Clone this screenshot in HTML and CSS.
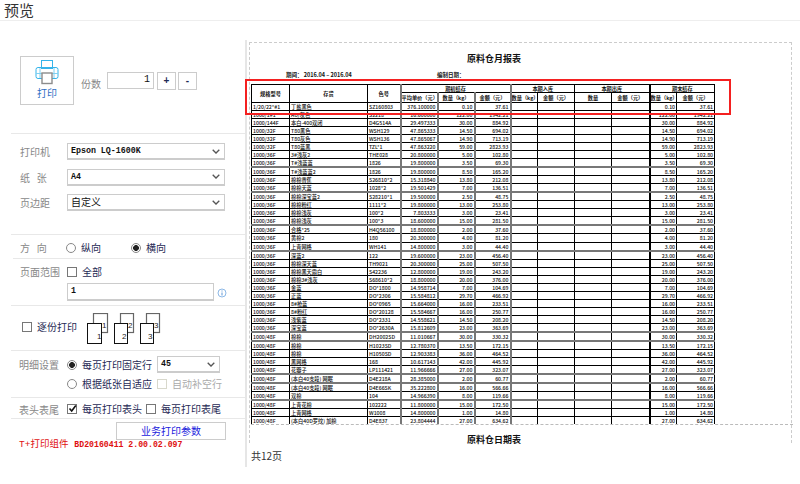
FILE: index.html
```html
<!DOCTYPE html>
<html lang="zh-CN">
<head>
<meta charset="utf-8">
<title>预览</title>
<link rel="stylesheet" href="styles.css">
</head>
<body>
<header class="topbar">预览</header>
<div class="layout">
  <aside class="panel">
    <section class="sec sec-print">
      <button class="print-btn">
        <svg width="24" height="25" viewBox="0 0 24 25" fill="none">
          <rect x="6.5" y="0.5" width="11" height="8" stroke="#35b4ea"/>
          <rect x="1" y="7.5" width="22" height="11" rx="2" stroke="#35b4ea"/>
          <path d="M1 13.5H23M5 8V18M19 8V18" stroke="#7fd0f2"/>
          <rect x="7" y="13" width="10" height="10.5" fill="#fff" stroke="#8c8c8c" stroke-width="1.4"/>
        </svg>
        <span>打印</span>
      </button>
      <span class="copies-label">份数</span>
      <span class="copies-input">1</span>
      <span class="step">+</span>
      <span class="step">-</span>
    </section>
    <section class="sec sec-form">
      <div class="field"><label>打印机</label><div class="select mono">Epson LQ-1600K<svg class="chev" viewBox="0 0 8 5"><path d="M.7.8 4 4 7.3.8" fill="none" stroke="#555" stroke-width="1.3"/></svg></div></div>
      <div class="field"><label>纸&nbsp;&nbsp;&nbsp;张</label><div class="select mono">A4<svg class="chev" viewBox="0 0 8 5"><path d="M.7.8 4 4 7.3.8" fill="none" stroke="#555" stroke-width="1.3"/></svg></div></div>
      <div class="field"><label>页边距</label><div class="select">自定义<svg class="chev" viewBox="0 0 8 5"><path d="M.7.8 4 4 7.3.8" fill="none" stroke="#555" stroke-width="1.3"/></svg></div></div>
    </section>
    <section class="sec sec-dir">
      <label class="lbl">方&nbsp;&nbsp;&nbsp;向</label>
      <span class="radio"></span><span class="opt opt-a">纵向</span>
      <span class="radio on"></span><span class="opt">横向</span>
    </section>
    <section class="sec sec-range">
      <div class="line">
        <label class="lbl">页面范围</label>
        <span class="check"></span><span class="opt">全部</span>
      </div>
      <div class="range-row">
        <div class="range-input">1</div>
        <svg class="info" width="10" height="10" viewBox="0 0 10 10"><circle cx="5" cy="5" r="4" fill="none" stroke="#8db8e6"/><path d="M5 2.5v1M5 4.5v3" stroke="#5d97d8"/></svg>
      </div>
    </section>
    <section class="sec sec-collate">
      <span class="check"></span><span class="opt collate-text">逐份打印</span>
      <svg class="pages" width="74" height="31" viewBox="0 0 74 31" font-family="Liberation Sans" font-size="8">
        <g fill="#fff">
          <rect x="6.5" y=".5" width="14" height="19" stroke="#666" stroke-width="1.2"/><text x="15" y="15" fill="#222">1</text>
          <rect x=".5" y="10.5" width="14" height="20" stroke="#111"/><text x="10" y="26" fill="#222">1</text>
          <rect x="33.5" y=".5" width="13" height="19" stroke="#666" stroke-width="1.2"/><text x="41" y="15" fill="#222">2</text>
          <rect x="27.5" y="10.5" width="13" height="20" stroke="#111"/><text x="35" y="26" fill="#222">2</text>
          <rect x="59.5" y=".5" width="13" height="19" stroke="#666" stroke-width="1.2"/><text x="67" y="15" fill="#222">3</text>
          <rect x="53.5" y="10.5" width="13" height="20" stroke="#111"/><text x="61" y="26" fill="#222">3</text>
        </g>
      </svg>
    </section>
    <section class="sec sec-detail">
      <div class="line">
        <label class="lbl">明细设置</label>
        <span class="radio on"></span><span class="opt opt-w">每页打印固定行</span>
        <div class="select select-sm mono">45<svg class="chev" viewBox="0 0 8 5"><path d="M.7.8 4 4 7.3.8" fill="none" stroke="#555" stroke-width="1.3"/></svg></div>
      </div>
      <div class="line">
        <label class="lbl"></label>
        <span class="radio"></span><span class="opt opt-w">根据纸张自适应</span>
        <span class="check disabled"></span><span class="opt muted">自动补空行</span>
      </div>
    </section>
    <section class="sec sec-tail">
      <label class="lbl">表头表尾</label>
      <span class="check checked"><svg width="9" height="9" viewBox="0 0 9 9"><path d="M1.5 4.5 3.7 7 7.8 1.5" fill="none" stroke="#111" stroke-width="1.6"/></svg></span><span class="opt opt-t">每页打印表头</span>
      <span class="check"></span><span class="opt">每页打印表尾</span>
    </section>
    <div class="biz-row"><button class="biz-btn">业务打印参数</button></div>
    <p class="version"><span class="version-name">T+打印组件</span> BD20160411 2.00.02.097</p>
  </aside>
  <main class="preview">
    <div class="paper">
      <h1 class="rpt-title">原料仓月报表</h1>
      <div class="rpt-meta"><span class="meta-a">期间： 2016.04 – 2016.04</span><span>编制日期：</span></div>
      <div class="sheet">
        <table class="grid">
          <colgroup>
            <col class="c1"><col class="c2"><col class="c3"><col class="c4"><col class="c4"><col class="c6"><col class="c7"><col class="c4"><col class="c4"><col class="c1"><col class="c7"><col class="c1">
          </colgroup>
          <thead>
            <tr class="h1"><th rowspan="2">规格型号</th><th rowspan="2">存货</th><th rowspan="2">色号</th><th colspan="3" class="g">期初结存</th><th colspan="2" class="g">本期入库</th><th colspan="2">本期出库</th><th colspan="2" class="k">期末结存</th></tr>
            <tr class="h2"><th class="g">平均单价（元）</th><th class="g">数量（kg）</th><th class="g">金额（元）</th><th class="g">数量（kg）</th><th>金额（元）</th><th>数量</th><th>金额（元）</th><th class="k">数量（kg）</th><th>金额（元）</th></tr>
          </thead>
          <tbody>
            <tr><td>1/20/22*#1</td><td>丁盐黑色</td><td>SZ160803</td><td class="n g">376.100000</td><td class="n g">0.10</td><td class="n g">37.61</td><td class="g"></td><td></td><td></td><td></td><td class="n k">0.10</td><td class="n">37.61</td></tr>
            <tr><td>1000/1#1</td><td>AU/灰色</td><td>S2218</td><td class="n g">16.600000</td><td class="n g">122.00</td><td class="n g">1942.21</td><td class="g"></td><td></td><td></td><td></td><td class="n k">122.00</td><td class="n">1942.21</td></tr>
            <tr><td>1000/144F</td><td>本白-400双闭</td><td>D4G514A</td><td class="n g">29.497333</td><td class="n g">30.00</td><td class="n g">884.92</td><td class="g"></td><td></td><td></td><td></td><td class="n k">30.00</td><td class="n">884.92</td></tr>
            <tr><td>1000/32F</td><td>T80黑色</td><td>WSH129</td><td class="n g">47.865333</td><td class="n g">14.50</td><td class="n g">694.02</td><td class="g"></td><td></td><td></td><td></td><td class="n k">14.50</td><td class="n">694.02</td></tr>
            <tr><td>1000/32F</td><td>T80灰色</td><td>WSH136</td><td class="n g">47.865067</td><td class="n g">14.90</td><td class="n g">713.19</td><td class="g"></td><td></td><td></td><td></td><td class="n k">14.90</td><td class="n">713.19</td></tr>
            <tr><td>1000/32F</td><td>T80蓝黑</td><td>TZL*1</td><td class="n g">47.863220</td><td class="n g">59.00</td><td class="n g">2823.93</td><td class="g"></td><td></td><td></td><td></td><td class="n k">59.00</td><td class="n">2823.93</td></tr>
            <tr><td>1000/36F</td><td>3#浅灰2</td><td>THE028</td><td class="n g">20.800000</td><td class="n g">5.00</td><td class="n g">102.80</td><td class="g"></td><td></td><td></td><td></td><td class="n k">5.00</td><td class="n">102.80</td></tr>
            <tr class="s"><td>1000/36F</td><td>T#浅蓝蓝</td><td>1826</td><td class="n g">19.800000</td><td class="n g">3.50</td><td class="n g">69.30</td><td class="g"></td><td></td><td></td><td></td><td class="n k">3.50</td><td class="n">69.30</td></tr>
            <tr><td>1000/36F</td><td>T#浅蓝蓝2</td><td>1826</td><td class="n g">19.800000</td><td class="n g">8.50</td><td class="n g">165.20</td><td class="g"></td><td></td><td></td><td></td><td class="n k">8.50</td><td class="n">165.20</td></tr>
            <tr><td>1000/36F</td><td>棉棉香蕉</td><td>S26810*2</td><td class="n g">15.318840</td><td class="n g">13.80</td><td class="n g">212.08</td><td class="g"></td><td></td><td></td><td></td><td class="n k">13.80</td><td class="n">212.08</td></tr>
            <tr class="s"><td>1000/36F</td><td>棉棉天蓝</td><td>1028*2</td><td class="n g">19.501429</td><td class="n g">7.00</td><td class="n g">136.51</td><td class="g"></td><td></td><td></td><td></td><td class="n k">7.00</td><td class="n">136.51</td></tr>
            <tr><td>1000/36F</td><td>棉棉深宝蓝2</td><td>S28210*1</td><td class="n g">19.500000</td><td class="n g">2.50</td><td class="n g">48.75</td><td class="g"></td><td></td><td></td><td></td><td class="n k">2.50</td><td class="n">48.75</td></tr>
            <tr><td>1000/36F</td><td>棉棉粉红</td><td>1111*2</td><td class="n g">19.800000</td><td class="n g">13.00</td><td class="n g">253.80</td><td class="g"></td><td></td><td></td><td></td><td class="n k">13.00</td><td class="n">253.80</td></tr>
            <tr><td>1000/36F</td><td>棉棉浅灰</td><td>100*2</td><td class="n g">7.803333</td><td class="n g">3.00</td><td class="n g">23.41</td><td class="g"></td><td></td><td></td><td></td><td class="n k">3.00</td><td class="n">23.41</td></tr>
            <tr class="s"><td>1000/36F</td><td>棉棉浅灰</td><td>100*3</td><td class="n g">18.600000</td><td class="n g">15.00</td><td class="n g">281.50</td><td class="g"></td><td></td><td></td><td></td><td class="n k">15.00</td><td class="n">281.50</td></tr>
            <tr><td>1000/36F</td><td>合格*25</td><td>H4Q56100</td><td class="n g">18.800000</td><td class="n g">2.00</td><td class="n g">37.60</td><td class="g"></td><td></td><td></td><td></td><td class="n k">2.00</td><td class="n">37.60</td></tr>
            <tr><td>1000/36F</td><td>黄棉2</td><td>180</td><td class="n g">20.300000</td><td class="n g">4.00</td><td class="n g">81.20</td><td class="g"></td><td></td><td></td><td></td><td class="n k">4.00</td><td class="n">81.20</td></tr>
            <tr class="s"><td>1000/36F</td><td>上青网格</td><td>WH141</td><td class="n g">14.800000</td><td class="n g">3.00</td><td class="n g">44.40</td><td class="g"></td><td></td><td></td><td></td><td class="n k">3.00</td><td class="n">44.40</td></tr>
            <tr><td>1000/36F</td><td>深蓝2</td><td>122</td><td class="n g">19.600000</td><td class="n g">23.00</td><td class="n g">456.40</td><td class="g"></td><td></td><td></td><td></td><td class="n k">23.00</td><td class="n">456.40</td></tr>
            <tr><td>1000/36F</td><td>棉棉深天蓝</td><td>TH9021</td><td class="n g">20.300000</td><td class="n g">25.00</td><td class="n g">507.50</td><td class="g"></td><td></td><td></td><td></td><td class="n k">25.00</td><td class="n">507.50</td></tr>
            <tr><td>1000/36F</td><td>棉棉黑天霜白</td><td>S42236</td><td class="n g">12.800000</td><td class="n g">19.00</td><td class="n g">243.20</td><td class="g"></td><td></td><td></td><td></td><td class="n k">19.00</td><td class="n">243.20</td></tr>
            <tr><td>1000/36F</td><td>棉棉3#浅灰</td><td>S68610*2</td><td class="n g">18.800000</td><td class="n g">20.00</td><td class="n g">376.00</td><td class="g"></td><td></td><td></td><td></td><td class="n k">20.00</td><td class="n">376.00</td></tr>
            <tr><td>1000/36F</td><td>金蓝</td><td>DO*1800</td><td class="n g">14.958714</td><td class="n g">7.00</td><td class="n g">104.69</td><td class="g"></td><td></td><td></td><td></td><td class="n k">7.00</td><td class="n">104.69</td></tr>
            <tr><td>1000/36F</td><td>正蓝</td><td>DO*2306</td><td class="n g">15.584812</td><td class="n g">29.70</td><td class="n g">466.92</td><td class="g"></td><td></td><td></td><td></td><td class="n k">29.70</td><td class="n">466.92</td></tr>
            <tr><td>1000/36F</td><td>8#枪蓝</td><td>DO*0965</td><td class="n g">15.664000</td><td class="n g">16.00</td><td class="n g">233.51</td><td class="g"></td><td></td><td></td><td></td><td class="n k">16.00</td><td class="n">233.51</td></tr>
            <tr><td>1000/36F</td><td>8#粉红</td><td>DO*20128</td><td class="n g">15.584667</td><td class="n g">16.00</td><td class="n g">250.77</td><td class="g"></td><td></td><td></td><td></td><td class="n k">16.00</td><td class="n">250.77</td></tr>
            <tr><td>1000/36F</td><td>浅紫蓝</td><td>DO*2331</td><td class="n g">14.558621</td><td class="n g">14.50</td><td class="n g">208.20</td><td class="g"></td><td></td><td></td><td></td><td class="n k">14.50</td><td class="n">208.20</td></tr>
            <tr class="s"><td>1000/36F</td><td>深宝蓝</td><td>DO*2630A</td><td class="n g">15.812609</td><td class="n g">23.00</td><td class="n g">363.69</td><td class="g"></td><td></td><td></td><td></td><td class="n k">23.00</td><td class="n">363.69</td></tr>
            <tr class="s"><td>1000/48F</td><td>棉棉</td><td>DH2002SD</td><td class="n g">11.010667</td><td class="n g">30.00</td><td class="n g">330.32</td><td class="g"></td><td></td><td></td><td></td><td class="n k">30.00</td><td class="n">330.32</td></tr>
            <tr><td>1000/48F</td><td>棉棉</td><td>H1023SD</td><td class="n g">12.780370</td><td class="n g">13.50</td><td class="n g">172.15</td><td class="g"></td><td></td><td></td><td></td><td class="n k">13.50</td><td class="n">172.15</td></tr>
            <tr><td>1000/48F</td><td>棉棉</td><td>H1050SD</td><td class="n g">12.903383</td><td class="n g">36.00</td><td class="n g">464.52</td><td class="g"></td><td></td><td></td><td></td><td class="n k">36.00</td><td class="n">464.52</td></tr>
            <tr><td>1000/48F</td><td>黑网格</td><td>168</td><td class="n g">10.617143</td><td class="n g">42.00</td><td class="n g">445.92</td><td class="g"></td><td></td><td></td><td></td><td class="n k">42.00</td><td class="n">445.92</td></tr>
            <tr class="s"><td>1000/48F</td><td>花瓣子</td><td>LP111421</td><td class="n g">11.966666</td><td class="n g">27.00</td><td class="n g">323.07</td><td class="g"></td><td></td><td></td><td></td><td class="n k">27.00</td><td class="n">323.07</td></tr>
            <tr class="s"><td>1000/48F</td><td>(本白40支段) 网眠</td><td>D4E218A</td><td class="n g">28.385000</td><td class="n g">2.00</td><td class="n g">60.77</td><td class="g"></td><td></td><td></td><td></td><td class="n k">2.00</td><td class="n">60.77</td></tr>
            <tr><td>1000/48F</td><td>(本白40支段) 网眠</td><td>D4E66SK</td><td class="n g">35.222800</td><td class="n g">16.00</td><td class="n g">566.66</td><td class="g"></td><td></td><td></td><td></td><td class="n k">16.00</td><td class="n">566.66</td></tr>
            <tr class="s"><td>1000/48F</td><td>双棉</td><td>104</td><td class="n g">14.966390</td><td class="n g">8.00</td><td class="n g">119.66</td><td class="g"></td><td></td><td></td><td></td><td class="n k">8.00</td><td class="n">119.66</td></tr>
            <tr><td>1000/48F</td><td>上青花棉</td><td>102222</td><td class="n g">11.800000</td><td class="n g">15.00</td><td class="n g">172.50</td><td class="g"></td><td></td><td></td><td></td><td class="n k">15.00</td><td class="n">172.50</td></tr>
            <tr><td>1000/48F</td><td>上青网格</td><td>W1008</td><td class="n g">14.800000</td><td class="n g">1.00</td><td class="n g">14.80</td><td class="g"></td><td></td><td></td><td></td><td class="n k">1.00</td><td class="n">14.80</td></tr>
            <tr><td>1000/48F</td><td>(本白40D罗纹) 加棉</td><td>D4E837</td><td class="n g">23.804444</td><td class="n g">27.00</td><td class="n g">634.62</td><td class="g"></td><td></td><td></td><td></td><td class="n k">27.00</td><td class="n">634.62</td></tr>
          </tbody>
        </table>
        <div class="total-row">合计</div>
      </div>
      <div class="rpt-foot">原料仓日期表</div>
    </div>
    <p class="page-count">共12页</p>
    <div class="highlight"></div>
  </main>
</div>
</body>
</html>
```
FILE: styles.css
```css
* { box-sizing: border-box; }
html, body { margin: 0; height: 100%; }
body {
  width: 800px; height: 484px; overflow: hidden; background: #fff;
  font-family: "Noto Sans CJK SC", "Liberation Sans", sans-serif;
  font-size: 10px; color: #1f2a55;
}
.topbar {
  height: 21px; padding-left: 4px; border-bottom: 1px solid #eee;
  font-size: 15px; line-height: 19px; color: #333;
}
.layout { display: flex; }
.panel { width: 245px; flex: none; }
.sec { margin-left: 11px; border-bottom: 1px solid #e8e8e8; }
.sec-print { height: 113px; display: flex; align-items: flex-start; padding: 35px 0 0 9px; }
.print-btn {
  width: 54px; height: 49px; padding: 3px 0 0; margin: 0; background: #fff;
  border: 1px solid #ccc; display: flex; flex-direction: column; align-items: center;
  font: inherit; color: #2f6fc4;
}
.print-btn span { line-height: 14px; margin-top: 1px; }
.copies-label { margin: 21px 0 0 7px; color: #888; line-height: 14px; }
.copies-input {
  width: 47px; height: 17px; margin: 16px 3px 0 6px; padding-right: 3px; text-align: right;
  border: 1px solid #ccc; font: 10px/14px "Liberation Mono", monospace; color: #111;
}
.step {
  width: 19px; height: 18px; margin: 16px 2px 0 0; border: 1px solid #ccc;
  text-align: center; font: bold 10px/15px "Liberation Sans", sans-serif; color: #1f2a55;
}
.sec-form { height: 101px; padding-top: 9px; display: flex; flex-direction: column; gap: 8.5px; }
.field { display: flex; align-items: center; padding-left: 9px; }
.field label { width: 47px; color: #888; }
.select {
  width: 158px; height: 17px; padding-left: 3px; border: 1px solid #ccc; border-bottom-width: 2px;
  display: flex; align-items: center; justify-content: space-between; color: #111; line-height: 14px;
}
.mono { font: bold 8.3px/14px "Liberation Mono", monospace; }
.chev { width: 8px; height: 5px; margin-right: 4px; }
.lbl { width: 47px; padding-left: 9px; margin-right: 9px; flex: none; color: #888; white-space: nowrap; }
.sec-dir { height: 24px; display: flex; align-items: center; margin-left: 13px; padding-top: 2px; }
.sec-dir .lbl { width: 53px; padding-left: 7px; margin: 0; }
.radio {
  width: 10px; height: 10px; flex: none; border: 1px solid #888; border-radius: 50%; background: #fff; margin-right: 5px;
}
.radio.on { background: radial-gradient(circle, #222 0 2.6px, #fff 3.2px); }
.opt { white-space: nowrap; line-height: 14px; }
.opt-a { margin-right: 30px; }
.check {
  width: 10px; height: 10px; flex: none; border: 1px solid #777; margin-right: 5px; background: #fff; display: inline-block;
}
.check svg { display: block; margin: -1px 0 0 0; }
.check.disabled { border-color: #d8d8cc; }
.muted { color: #aaa; }
.line { display: flex; align-items: center; }
.sec-range { margin-left: 11px; height: 47px; padding-top: 5px; }
.sec-range .lbl { width: 56px; padding-left: 9px; margin: 0; }
.range-row { display: flex; align-items: center; padding-left: 56px; margin-top: 4px; }
.range-input {
  width: 147px; height: 18px; padding-left: 3px; border: 1px solid #ccc; border-bottom-width: 2px;
  font: bold 8.3px/14px "Liberation Mono", monospace; color: #111;
}
.info { margin-left: 3px; margin-top: 2px; }
.sec-collate { height: 45px; display: flex; align-items: center; padding-left: 11px; }
.sec-collate .check, .collate-text { margin-bottom: 3px; }
.collate-text { width: 50px; font-size: 10px; margin-right: 0; }
.sec-collate .check { margin-right: 5px; }
.sec-detail { height: 47px; padding-top: 4px; }
.sec-detail .lbl { width: 56px; padding-left: 8px; margin: 0; }
.sec-detail .line { height: 19px; }
.opt-w { width: 75px; }
.select-sm { width: 63px; }
.sec-tail { height: 21px; display: flex; align-items: center; margin-left: 11px; padding-top: 2px; }
.sec-tail .lbl { width: 56px; padding-left: 8px; margin: 0; }
.opt-t { width: 64px; }
.biz-row { display: flex; padding: 3px 0 0 116px; }
.biz-btn {
  width: 110px; height: 18px; padding: 0; background: #fff; border: 1px solid #ccc;
  font: inherit; line-height: 14px; color: #2222dd;
}
.version {
  margin: 0 0 0 19px; font: 8.2px/10px "Liberation Mono", monospace; font-weight: 700; color: #e01010; white-space: nowrap;
}
.version-name { font-family: "Liberation Mono", "Noto Sans CJK SC", monospace; font-size: 9.5px; font-weight: 400; margin-right: 1px; }
.preview {
  position: relative; flex: 1; height: 427px; margin-top: 19px; padding: 2px 0 0 2px;
  border-left: 2px solid #e6e6e6;
}
.paper {
  width: 543px; height: 401px; padding: 0 0 0 2px; border: 1px dashed #ccc; border-bottom: 0;
}
.rpt-title { width: 484px; margin: 10px 0 0; text-align: center; font-size: 9px; line-height: 12px; font-weight: 700; color: #111; }
.rpt-meta { display: flex; margin-top: 6px; height: 8px; font-size: 5.5px; line-height: 8px; font-weight: 700; color: #111; }
.meta-a { margin: 0 81px 0 34px; width: 70px; white-space: nowrap; }
.sheet { width: 542px; height: 341px; margin: 5px -2px 0 -1px; overflow: hidden; border-bottom: 1px dashed #bbb; }
.grid { width: 463px; table-layout: fixed; border-collapse: collapse; font-size: 5.2px; color: #111; background: #fff; }
.c1 { width: 38px; } .c2 { width: 78px; } .c3 { width: 33px; } .c4 { width: 37px; }
.c6 { width: 36px; } .c7 { width: 27px; }
.grid th, .grid td {
  border: 1px solid #000; padding: 0 1px; line-height: 7px; height: 8.05px; overflow: hidden; white-space: nowrap;
}
.grid th { font-weight: 700; text-align: center; font-size: 5.2px; padding: 0; }
.grid .h1 th { height: 8.4px; }
.grid .h2 th { height: 9.6px; }
.grid td { font-weight: 500; }
.grid .n { text-align: right; }
.grid .g { border-left-color: #777; border-left-width: 2px; }
.grid .k { border-left-width: 2px; border-left-color: #000; }
.grid .s td { border-bottom: 2px solid #777; }
.total-row { font-size: 5.2px; line-height: 7px; padding-left: 2px; color: #111; }
.rpt-foot { width: 484px; margin-top: 10px; text-align: center; font-size: 9px; line-height: 10px; font-weight: 700; color: #111; }
.page-count { margin: 6px 0 0 2px; font-size: 10px; line-height: 14px; color: #333; }
.highlight { position: absolute; left: -2px; top: 39px; width: 486px; height: 36px; border: 2px solid #f42020; }
```
